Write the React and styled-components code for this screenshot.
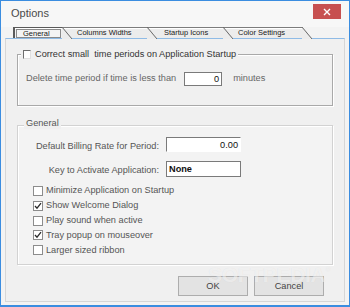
import React from 'react';
import styled, { createGlobalStyle, css } from 'styled-components';

const Global = createGlobalStyle`
  html, body { margin: 0; padding: 0; background: #ffffff; }
  body { font-family: "Liberation Sans", Arial, sans-serif; }
  *, *::before, *::after { box-sizing: border-box; }
`;

const Window = styled.div`
  position: relative;
  width: 350px;
  height: 307px;
  border: 1px solid #3b8de0;
  border-bottom-width: 2px;
  background: #f0f0f0;
  display: flex;
  flex-direction: column;
  overflow: hidden;
`;

const TitleBar = styled.div`
  flex: none;
  height: 26px;
  display: flex;
  align-items: flex-start;
  justify-content: space-between;
  background: #f7f7f7;
`;

const Title = styled.div`
  padding: 6px 0 0 10px;
  font-size: 11px;
  line-height: 13px;
  color: #4a4a4a;
`;

const CloseButton = styled.div`
  margin: 3px 8px 0 0;
  width: 28px;
  height: 15px;
  background: #c75050;
  display: flex;
  align-items: center;
  justify-content: center;
`;

const Body = styled.div`
  flex: 1;
  display: flex;
  flex-direction: column;
  padding: 0 4px 3px 4px;
  background: #f3f3f3;
`;

const TabStrip = styled.div`
  flex: none;
  height: 11px;
  display: flex;
  padding-left: 8px;
`;

const Tab = styled.div`
  position: relative;
  flex: none;
  width: ${p => p.$w}px;
  height: 11px;
  padding-left: ${p => p.$pad}px;
  font-size: 7.5px;
  line-height: 10px;
  color: #1a1a1a;
  white-space: nowrap;
  background: #ececec;
  border-top: 1px solid #7c7c7c;
  box-shadow: inset 0 1px 0 #ffffff;
  &::after {
    content: '';
    position: absolute;
    left: 100%;
    top: -1px;
    width: 10px;
    height: 12px;
    z-index: 2;
    background: linear-gradient(
      to top right,
      #ececec calc(50% - 0.8px),
      #6a6a6a 50%,
      transparent calc(50% + 0.8px)
    );
  }
  ${p => p.$active && css`
    background: #f0f0f0;
    border-left: 2px solid #5a5a5a;
    border-top: 1px solid #5a5a5a;
    padding: 1px 1px 0 1px;
  `}
`;

const ActiveLabel = styled.div`
  height: 9px;
  border: 1px solid #8a8a8a;
  padding-left: 6px;
  line-height: 7px;
  background: #f4f4f4;
`;

const Frame = styled.div`
  flex: 1;
  display: flex;
  flex-direction: column;
  border: 1px solid #d6d6d6;
  border-top: 1px solid #8fbbe6;
  background: #f0f0f0;
  padding: 15px 11px 5px 11px;
`;

const GroupBox = styled.div`
  position: relative;
  flex: none;
  height: ${p => p.$h}px;
  margin-top: ${p => p.$mt || 0}px;
  border: 1px solid ${p => p.$dark ? '#a9a9a9' : '#d2d2d2'};
  box-shadow: inset 1px 1px 0 #ffffff, 1px 1px 0 #ffffff;
  background: ${p => p.$fill || 'transparent'};
  padding: ${p => p.$pad};
`;

const Caption = styled.div`
  position: absolute;
  top: ${p => p.$top}px;
  left: ${p => p.$left}px;
  display: flex;
  align-items: center;
  gap: 4px;
  padding: 0 2px;
  background: #f0f0f0;
  font-size: 9.2px;
  line-height: 11px;
  color: ${p => p.$color || '#555'};
  white-space: pre;
`;

const Sunken = styled.div`
  width: 8px;
  height: 9px;
  background: #ffffff;
  border-top: 1px solid #6e6e6e;
  border-left: 1px solid #6e6e6e;
  border-right: 1px solid #e0e0e0;
  border-bottom: 1px solid #e0e0e0;
`;

const Row = styled.div`
  display: flex;
  align-items: center;
  height: 15px;
`;

const Text = styled.span`
  font-size: 9.2px;
  line-height: 11px;
  color: ${p => p.$color || '#555'};
  white-space: nowrap;
  margin-left: ${p => p.$ml || 0}px;
`;

const Field = styled.div`
  width: ${p => p.$w}px;
  height: ${p => p.$h || 15}px;
  margin-left: ${p => p.$ml || 0}px;
  background: #ffffff;
  border: 1px solid #7a7a7a;
  ${p => p.$open && css`
    border-right-color: #ffffff;
    border-bottom-color: #ffffff;
  `}
  display: flex;
  align-items: center;
  justify-content: ${p => p.$right ? 'flex-end' : 'flex-start'};
  padding: 0 2px;
  font-size: 9.2px;
  color: #111;
  font-weight: ${p => p.$bold ? 700 : 400};
`;

const FormGrid = styled.div`
  display: grid;
  grid-template-columns: 141px 75px;
  column-gap: 7px;
  row-gap: 9px;
  align-items: center;
`;

const FormLabel = styled.div`
  text-align: right;
  font-size: 9.2px;
  line-height: 11px;
  color: #555;
  white-space: nowrap;
  padding-top: 3px;
`;

const CheckList = styled.div`
  margin-top: 6.6px;
  padding-left: 15px;
  display: flex;
  flex-direction: column;
`;

const CheckRow = styled.div`
  height: 14.8px;
  display: flex;
  align-items: center;
  gap: 3px;
`;

const Box = styled.div`
  flex: none;
  width: 10px;
  height: 10px;
  background: #ffffff;
  border: 1px solid #8c8c8c;
  display: flex;
  align-items: center;
  justify-content: center;
`;

const ButtonRow = styled.div`
  margin-top: auto;
  display: flex;
  justify-content: flex-end;
  gap: 6px;
  padding-right: 9px;
`;

const Button = styled.div`
  width: ${p => p.$w}px;
  height: 20px;
  border: 1px solid #adadad;
  background: #e3e3e3;
  display: flex;
  align-items: center;
  justify-content: center;
  font-size: 9.2px;
  color: #444;
`;

const Watermark = styled.div`
  position: absolute;
  left: 207px;
  top: 262px;
  font-size: 21px;
  font-weight: 700;
  letter-spacing: -0.3px;
  color: rgba(255, 255, 255, 0.55);
  text-shadow: 0 0 1px rgba(0, 0, 0, 0.08);
  pointer-events: none;
  sup { font-size: 7px; vertical-align: 10px; }
`;

const Check = () => (
  <svg width="8" height="8" viewBox="0 0 8 8">
    <polyline points="1,4 3,6.2 7,1.2" fill="none" stroke="#2b2b2b" strokeWidth="1.3" />
  </svg>
);

const CheckItem = ({ checked, children }) => (
  <CheckRow>
    <Box>{checked && <Check />}</Box>
    <Text>{children}</Text>
  </CheckRow>
);

export default function App() {
  return (
    <>
      <Global />
      <Window>
        <TitleBar>
          <Title>Options</Title>
          <CloseButton>
            <svg width="8" height="8" viewBox="0 0 8 8">
              <path d="M1 1 L7 7 M7 1 L1 7" stroke="#fff" strokeWidth="1.4" />
            </svg>
          </CloseButton>
        </TitleBar>
        <Body>
          <TabStrip>
            <Tab $w={49} $active>
              <ActiveLabel>General</ActiveLabel>
            </Tab>
            <Tab $w={85} $pad={15}>Columns Widths</Tab>
            <Tab $w={76} $pad={17}>Startup Icons</Tab>
            <Tab $w={79} $pad={15}>Color Settings</Tab>
          </TabStrip>
          <Frame>
            <GroupBox $h={52} $dark $pad="16px 0 0 8px">
              <Caption $top={-6} $left={3} $color="#333">
                <Sunken />
                {'Correct small  time periods on Application Startup'}
              </Caption>
              <Row>
                <Text $color="#666">Delete time period if time is less than</Text>
                <Field $w={38} $h={14} $ml={8} $right>0</Field>
                <Text $color="#666" $ml={11}>minutes</Text>
              </Row>
            </GroupBox>
            <GroupBox $h={140} $mt={19} $pad="11px 0 0 0" $fill="#f3f3f3">
              <Caption $top={-8} $left={6} $color="#555">General</Caption>
              <FormGrid>
                <FormLabel>Default Billing Rate for Period:</FormLabel>
                <Field $w={75} $open $right>0.00</Field>
                <FormLabel>Key to Activate Application:</FormLabel>
                <Field $w={75} $h={16} $bold>None</Field>
              </FormGrid>
              <CheckList>
                <CheckItem>Minimize Application on Startup</CheckItem>
                <CheckItem checked>Show Welcome Dialog</CheckItem>
                <CheckItem>Play sound when active</CheckItem>
                <CheckItem checked>Tray popup on mouseover</CheckItem>
                <CheckItem>Larger sized ribbon</CheckItem>
              </CheckList>
            </GroupBox>
            <ButtonRow>
              <Button $w={70}>OK</Button>
              <Button $w={70}>Cancel</Button>
            </ButtonRow>
          </Frame>
        </Body>
        <Watermark>SOFTPEDIA<sup>®</sup></Watermark>
      </Window>
    </>
  );
}
